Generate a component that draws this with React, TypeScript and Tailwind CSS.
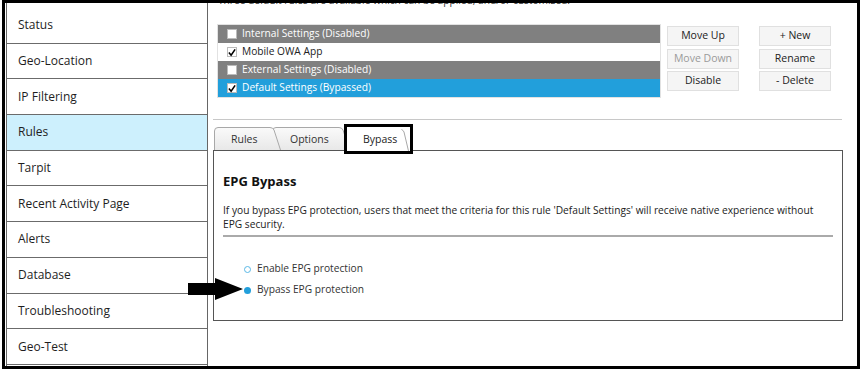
import React from "react";

const font = { fontFamily: '"Open Sans", "Noto Sans", sans-serif' };

const sideItems = [
  "Status",
  "Geo-Location",
  "IP Filtering",
  "Rules",
  "Tarpit",
  "Recent Activity Page",
  "Alerts",
  "Database",
  "Troubleshooting",
  "Geo-Test",
];

const rules = [
  { label: "Internal Settings (Disabled)", checked: false, bg: "bg-[#808080]", text: "text-white" },
  { label: "Mobile OWA App", checked: true, bg: "bg-white", text: "text-[#222]" },
  { label: "External Settings (Disabled)", checked: false, bg: "bg-[#808080]", text: "text-white" },
  { label: "Default Settings (Bypassed)", checked: true, bg: "bg-[#229fdb]", text: "text-white" },
];

function Check({ checked }: { checked: boolean }) {
  return (
    <div className="w-[10px] h-[10px] bg-white flex items-center justify-center shrink-0 border border-[#bbb]">
      {checked && (
        <svg width="9" height="9" viewBox="0 0 9 9">
          <path d="M1 4.5 L3.5 7.5 L8 1" fill="none" stroke="#000" strokeWidth="1.8" />
        </svg>
      )}
    </div>
  );
}

function Btn({ label, disabled }: { label: string; disabled?: boolean }) {
  return (
    <div
      className={`w-[72px] h-[20px] flex items-center justify-center bg-[#f5f5f5] border border-[#e0e0e0] text-[10.5px] ${
        disabled ? "text-[#9a9a9a]" : "text-[#222]"
      }`}
    >
      {label}
    </div>
  );
}

function TabShape({ w, h }: { w: number; h: number }) {
  return (
    <svg className="absolute left-0 top-0" width={w} height={h} viewBox={`0 0 ${w} ${h}`}>
      <defs>
        <linearGradient id="tg" x1="0" y1="0" x2="0" y2="1">
          <stop offset="0" stopColor="#fafafa" />
          <stop offset="1" stopColor="#e8e8e8" />
        </linearGradient>
      </defs>
      <path
        d={`M0.5 ${h} L0.5 4 Q0.5 0.5 4 0.5 L${w - 11} 0.5 Q${w - 8} 0.5 ${w - 7} 3 L${w - 0.5} ${h}`}
        fill="url(#tg)"
        stroke="#a8a8a8"
        strokeWidth="1"
      />
    </svg>
  );
}

export default function App() {
  return (
    <div className="w-[863px] h-[371px] bg-white overflow-hidden relative" style={font}>
      <div className="ml-[2px] w-[858px] h-[369px] border-[3px] border-black flex overflow-hidden">
        {/* Sidebar */}
        <div className="ml-[1px] w-[202px] h-full border-l border-r border-[#666] pt-[5px] shrink-0">
          {sideItems.map((s) => (
            <div
              key={s}
              className={`h-[35.7px] border-b border-[#6b6b6b] flex items-center pl-[11px] text-[12px] text-[#1e1e1e] ${
                s === "Rules" ? "bg-[#cdf0fd]" : "bg-white"
              }`}
            >
              {s}
            </div>
          ))}
        </div>

        {/* Main */}
        <div className="flex-1 flex flex-col">
          <div className="-mt-[11px] ml-[10px] h-[16px] leading-[16px] text-[10.2px] text-[#333] whitespace-nowrap">
            Three default rules are available which can be applied, and/or customized.
          </div>

          <div className="mt-[16px] flex items-start">
            <div className="ml-[9px] w-[444px] border border-[#e2e2e2]">
              {rules.map((r) => (
                <div key={r.label} className={`h-[18px] flex items-center pl-[9px] gap-[5px] ${r.bg} ${r.text} text-[10.2px]`}>
                  <Check checked={r.checked} />
                  <span>{r.label}</span>
                </div>
              ))}
            </div>
            <div className="ml-[6px] mt-[2px] grid grid-cols-[72px_72px] gap-x-[20px] gap-y-[2.5px]">
              <Btn label="Move Up" />
              <Btn label="+ New" />
              <Btn label="Move Down" disabled />
              <Btn label="Rename" />
              <Btn label="Disable" />
              <Btn label="- Delete" />
            </div>
          </div>

          <div className="mt-[21px] ml-[5px] w-[629px] h-px bg-[#c8c8c8]" />

          {/* Tabs */}
          <div className="mt-[4px] ml-[5px] h-[26px] flex items-start">
            <div className="relative z-[2] mt-[3px] ml-[1px] w-[67px] h-[23px] text-[10.5px] text-[#333]">
              <TabShape w={67} h={23} />
              <span className="relative block pl-[17px] leading-[23px] mt-[1px]">Rules</span>
            </div>
            <div className="relative z-[1] mt-[3px] -ml-[9px] w-[78px] h-[23px] text-[10.5px] text-[#333]">
              <TabShape w={78} h={23} />
              <span className="relative block pl-[18px] leading-[23px] mt-[1px]">Options</span>
            </div>
            <div className="relative z-[3] -ml-[6px] w-[69px] h-[30px] border-[3px] border-black bg-white text-[10.5px] text-[#222]">
              <svg className="absolute right-[1px] top-[2px]" width="8" height="22" viewBox="0 0 8 22">
                <path d="M0.5 0.5 Q2 1 3 3 L7.5 22" fill="none" stroke="#a8a8a8" strokeWidth="1" />
              </svg>
              <span className="relative block pl-[16px] leading-[23px] mt-[1px]">Bypass</span>
            </div>
          </div>

          {/* Panel */}
          <div className="ml-[5px] w-[630px] h-[171px] border border-[#555] bg-white">
            <div className="pl-[9px] pr-[9px]">
              <div className="mt-[21px] text-[13px] font-bold text-[#111] leading-[18px]">EPG Bypass</div>
              <div className="mt-[13px] text-[10.2px] text-[#222] leading-[14px]">
                If you bypass EPG protection, users that meet the criteria for this rule 'Default Settings' will receive native experience without
                <br />
                EPG security.
              </div>
              <div className="mt-[4px] h-[2px] bg-[#aaa]" />
              <div className="mt-[25px] ml-[21px] flex flex-col gap-[7px] text-[10.2px] text-[#333]">
                <div className="flex items-center h-[14px] gap-[6px]">
                  <div className="w-[7px] h-[7px] rounded-full border-[1.5px] border-[#59b8e6] bg-white" />
                  <span>Enable EPG protection</span>
                </div>
                <div className="flex items-center h-[14px] gap-[6px]">
                  <div className="w-[7px] h-[7px] rounded-full bg-[#229fdb]" />
                  <span>Bypass EPG protection</span>
                </div>
              </div>
            </div>
          </div>
        </div>
      </div>

      {/* Annotation arrow */}
      <svg className="absolute left-[188px] top-[277px]" width="56" height="24" viewBox="0 0 56 24">
        <polygon points="0,6 27,6 27,1 55,12 27,23 27,18 0,18" fill="#000" />
      </svg>
    </div>
  );
}
